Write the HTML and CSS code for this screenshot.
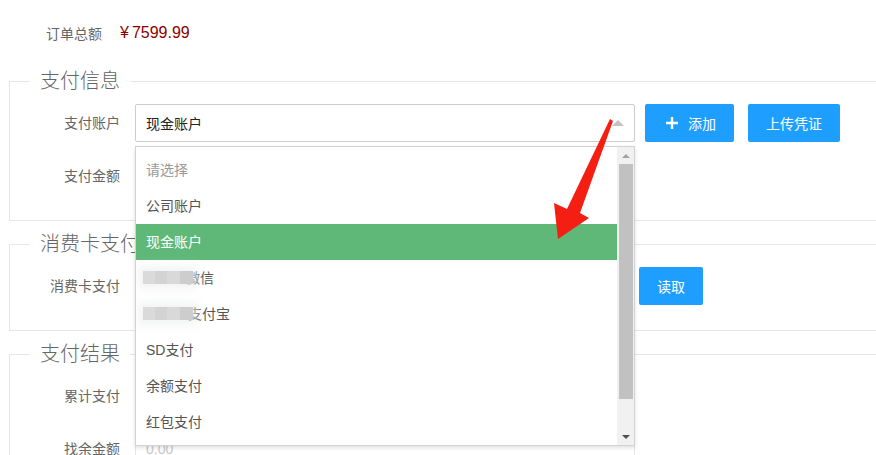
FILE: index.html
```html
<!DOCTYPE html>
<html lang="zh-CN">
<head>
<meta charset="utf-8">
<title>支付</title>
<link rel="stylesheet" href="styles.css">
</head>
<body>
<div class="page">
  <div class="summary">
    <span class="summary-label">订单总额</span>
    <span class="summary-value"><span class="yen">¥</span>7599.99</span>
  </div>

  <fieldset class="field">
    <legend class="field-title">支付信息</legend>
    <div class="field-box">
      <div class="form-item">
        <label class="form-label">支付账户</label>
        <div class="select">
          <div class="select-title"><span>现金账户</span><i class="edge"></i></div>
          <div class="dropdown">
            <div class="dd-list">
              <div class="dd dd-placeholder">请选择</div>
              <div class="dd">公司账户</div>
              <div class="dd dd-selected">现金账户</div>
              <div class="dd"><span class="mosaic mosaic-a"></span>微信</div>
              <div class="dd"><span class="mosaic mosaic-b"></span>支付宝</div>
              <div class="dd">SD支付</div>
              <div class="dd">余额支付</div>
              <div class="dd">红包支付</div>
            </div>
            <div class="scrollbar">
              <div class="sb-btn"><i class="sb-up"></i></div>
              <div class="sb-track"><div class="sb-thumb"></div></div>
              <div class="sb-btn"><i class="sb-down"></i></div>
            </div>
          </div>
        </div>
        <button class="btn"><svg class="plus" width="18" height="18" viewBox="0 0 18 18"><path d="M9 3V15M3 9H15" stroke="#fff" stroke-width="2.4" fill="none"/></svg>添加</button>
        <button class="btn">上传凭证</button>
      </div>
      <div class="form-item">
        <label class="form-label">支付金额</label>
        <input class="input" type="text" value="">
      </div>
    </div>
  </fieldset>

  <fieldset class="field">
    <legend class="field-title">消费卡支付</legend>
    <div class="field-box">
      <div class="form-item">
        <label class="form-label">消费卡支付</label>
        <input class="input input-short" type="text" value="">
        <button class="btn">读取</button>
      </div>
    </div>
  </fieldset>

  <fieldset class="field">
    <legend class="field-title">支付结果</legend>
    <div class="field-box">
      <div class="form-item">
        <label class="form-label">累计支付</label>
        <input class="input" type="text" value="">
      </div>
      <div class="form-item">
        <label class="form-label">找余金额</label>
        <input class="input" type="text" value="0.00" readonly>
      </div>
    </div>
  </fieldset>

  <svg class="annot" width="876" height="455" viewBox="0 0 876 455">
    <polygon points="610,119 613,121 580,213 589,218 558,239 554,203 567,209" fill="#f41e12"/>
  </svg>
</div>
</body>
</html>
```

FILE: styles.css
```css
* { box-sizing: border-box; }
html, body { margin: 0; overflow: hidden; background: #fff; }
body {
  font-family: "Liberation Sans", "Noto Sans CJK SC", sans-serif;
  font-size: 14px;
  color: #666;
}
.page { position: relative; width: 900px; padding: 14px 0 0 9px; }

.summary { display: flex; align-items: center; height: 38px; margin-bottom: 16px; }
.summary-label { width: 93px; text-align: right; color: #666; }
.summary-value { margin-left: 18px; color: #8b0000; font-size: 16px; }
.yen { margin-right: 3px; }

.field { margin: 0 0 10px; padding: 0; border: 1px solid #e6e6e6; min-width: 0; }
.field-title {
  margin-left: 20px; padding: 0 10px;
  font-size: 20px; line-height: 26px; height: 26px;
  color: #666; font-weight: 300;
}
.field-box { padding: 10px 15px; }
.form-item { display: flex; align-items: flex-start; margin-bottom: 15px; }
.form-label {
  flex: none; width: 110px; padding: 9px 15px;
  line-height: 20px; text-align: right; color: #666;
}

.select { position: relative; width: 500px; flex: none; }
.select-title {
  display: flex; align-items: center; justify-content: space-between;
  height: 38px; padding: 0 10px;
  border: 1px solid #ccc; border-radius: 2px; color: #222; background: #fff;
}
.edge {
  width: 0; height: 0; border-style: solid;
  border-width: 0 6px 6px; border-color: transparent transparent #c2c2c2;
}

.dropdown {
  position: absolute; left: 0; top: 42px; z-index: 10;
  width: 500px; height: 300px;
  display: flex; overflow: hidden;
  border: 1px solid #d2d2d2; background: #fff;
  box-shadow: 0 2px 4px rgba(0,0,0,.12);
}
.dd-list { flex: 1; padding-top: 5px; overflow: hidden; }
.dd {
  height: 36px; line-height: 36px; padding: 0 10px;
  white-space: nowrap; color: #555;
}
.dd-placeholder { color: #999; }
.dd-selected { background: #5fb878; color: #fff; }

.mosaic {
  position: relative; z-index: 1;
  display: inline-block; vertical-align: middle;
  width: 50px; height: 13px; margin-left: -3px; margin-top: -3px;
  background: linear-gradient(90deg, #dadada 0 24%, #d3d3d3 24% 48%, #d9d9d9 48% 74%, #cdcdcd 74%);
  filter: blur(0.6px);
  box-shadow: 0 0 8px 5px rgba(236,240,238,.7);
}
.mosaic-a { margin-right: -7px; }
.mosaic-b { margin-right: -5px; }

.scrollbar { flex: none; width: 17px; display: flex; flex-direction: column; background: #f1f1f1; }
.sb-btn { flex: none; height: 17px; display: flex; align-items: center; justify-content: center; }
.sb-up { width: 0; height: 0; border-style: solid; border-width: 0 4px 4px; border-color: transparent transparent #a3a3a3; }
.sb-down { width: 0; height: 0; border-style: solid; border-width: 4px 4px 0; border-color: #505050 transparent transparent; }
.sb-track { flex: 1; }
.sb-thumb { height: 235px; margin: 0 1px 0 2px; background: #c1c1c1; }

.input {
  display: block; flex: none;
  width: 500px; height: 38px; padding: 0 10px;
  border: 1px solid #e6e6e6; border-radius: 2px;
  font: inherit; color: #c8c8c8; background: #fff; outline: none;
}
.input-short { width: 494px; }

.btn {
  flex: none; display: inline-flex; align-items: center;
  height: 38px; padding: 0 18px; margin-left: 10px;
  border: 0; border-radius: 2px;
  background: #1e9fff; color: #fff;
  font: inherit; font-size: 14px;
}
.btn + .btn { margin-left: 14px; }
.plus { margin-right: 7px; }

.annot { position: absolute; left: 0; top: 0; pointer-events: none; z-index: 20; }
```
